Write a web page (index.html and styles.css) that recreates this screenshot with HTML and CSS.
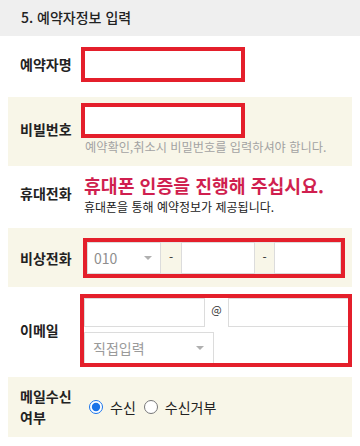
FILE: index.html
```html
<!DOCTYPE html>
<html lang="ko">
<head>
<meta charset="utf-8">
<link rel="stylesheet" href="styles.css">
</head>
<body>
<div class="header">5. 예약자정보 입력</div>

<div class="row r1">
  <div class="label">예약자명</div>
  <div class="hl name-box"><div class="plain"></div></div>
</div>

<div class="row alt r2">
  <div class="label">비빌번호</div>
  <div class="field">
    <div class="hl name-box"><div class="plain"></div></div>
    <div class="help">예약확인,취소시 비밀번호를 입력하셔야 합니다.</div>
  </div>
</div>

<div class="row r3">
  <div class="label">휴대전화</div>
  <div class="field cert">
    <div class="cert-title">휴대폰 인증을 진행해 주십시요.</div>
    <div class="cert-sub">휴대폰을 통해 예약정보가 제공됩니다.</div>
  </div>
</div>

<div class="row alt r4">
  <div class="label">비상전화</div>
  <div class="hl phone-box">
    <div class="sel sel-phone"><span>010</span><i class="caret"></i></div>
    <div class="dash">-</div>
    <div class="inp inp-mid"></div>
    <div class="dash">-</div>
    <div class="inp inp-last"></div>
  </div>
</div>

<div class="row r5">
  <div class="label">이메일</div>
  <div class="hl mail-box">
    <div class="mail-line">
      <div class="inp mail-id"></div>
      <div class="at">@</div>
      <div class="inp mail-domain"></div>
    </div>
    <div class="sel sel-mail"><span>직접입력</span><i class="caret"></i></div>
  </div>
</div>

<div class="row alt r6">
  <div class="label">메일수신<br>여부</div>
  <div class="radios">
    <label class="opt"><input type="radio" name="mail" checked><span>수신</span></label>
    <label class="opt"><input type="radio" name="mail"><span>수신거부</span></label>
  </div>
</div>
</body>
</html>
```

FILE: styles.css
```css
* { box-sizing: border-box; }
html, body {
  margin: 0;
  padding: 0;
  background: #ffffff;
}
body {
  width: 360px;
  font-family: "Noto Sans CJK KR", "Noto Sans", sans-serif;
  color: #222;
}
.header {
  height: 36px;
  line-height: 34px;
  padding-left: 21px;
  background: #efefef;
  font-size: 14px;
  font-weight: 500;
  color: #222;
}
.row {
  display: flex;
  align-items: center;
  margin: 0 8px;
  padding-left: 12px;
}
.row.alt { background: #f8f6e8; }
.label {
  width: 61px;
  flex: none;
  font-size: 14px;
  font-weight: bold;
  line-height: 20.5px;
  color: #222;
}
.hl {
  border: 4px solid #e41f2b;
  background: #fff;
  flex: none;
}
.plain { width: 100%; height: 100%; background: #fff; }
.field { display: flex; flex-direction: column; }

.r1 { padding-top: 11px; padding-bottom: 15px; }
.name-box { width: 164px; height: 35px; }

.r2 { padding-top: 6px; padding-bottom: 10px; }
.help {
  margin-left: 4px;
  font-size: 12.2px;
  line-height: 18px;
  color: #a3a3a3;
  white-space: nowrap;
}

.r3 { padding-top: 5.75px; padding-bottom: 12.35px; }
.cert { margin-left: 3px; }
.cert-title {
  font-size: 18.3px;
  font-weight: bold;
  line-height: 26.5px;
  color: #d01f4f;
  white-space: nowrap;
}
.cert-sub {
  font-size: 12px;
  line-height: 17.4px;
  color: #222;
  white-space: nowrap;
}

.r4 { padding-top: 10px; padding-bottom: 9px; }
.phone-box {
  margin-left: 2px;
  width: 262px;
  height: 40px;
  display: flex;
}
.sel {
  position: relative;
  display: flex;
  align-items: center;
  background: #fff;
  border: 1px solid #dcdcdc;
  font-size: 14px;
  color: #8e8e8e;
}
.sel span { padding-left: 6px; }
.caret {
  position: absolute;
  top: 50%;
  margin-top: -2px;
  width: 0;
  height: 0;
  border-left: 4px solid transparent;
  border-right: 4px solid transparent;
  border-top: 4px solid #b0b0b0;
}
.sel-phone { width: 74px; height: 100%; }
.sel-phone .caret { right: 8px; }
.dash {
  width: 20px;
  display: flex;
  align-items: flex-start;
  justify-content: center;
  padding-top: 5px;
  font-size: 12px;
  color: #333;
  background: #f8f6e8;
  border-top: 1px solid #e6e6e6;
  border-bottom: 1px solid #e6e6e6;
}
.dash + .inp + .dash { width: 19px; }
.inp {
  background: #fff;
  border: 1px solid #dcdcdc;
}
.inp-mid { width: 74px; }
.inp-last { flex: 1; }

.r5 { padding-top: 7px; padding-bottom: 10px; }
.mail-box {
  margin-left: -1px;
  width: 272px;
  height: 73px;
  display: flex;
  flex-direction: column;
}
.mail-line { display: flex; height: 29px; }
.mail-id { width: 121px; }
.at {
  width: 23px;
  text-align: center;
  font-size: 11px;
  line-height: 22px;
  color: #333;
  border-bottom: 1px solid #fff;
}
.mail-domain { flex: 1; border-right: none; }
.sel-mail {
  margin-top: 5px;
  width: 130px;
  height: 31px;
  border-bottom: none;
}
.sel-mail span { padding-left: 8px; color: #9a9a9a; }
.sel-mail .caret { right: 9px; }

.r6 { padding-top: 9px; padding-bottom: 10px; }
.radios { display: flex; align-items: center; margin-left: 8px; }
.opt {
  display: flex;
  align-items: center;
  font-size: 14px;
  color: #222;
  margin-right: 8px;
}
.opt input {
  width: 14px;
  height: 14px;
  margin: 0 7px 0 0;
  accent-color: #1a73e8;
}
```
